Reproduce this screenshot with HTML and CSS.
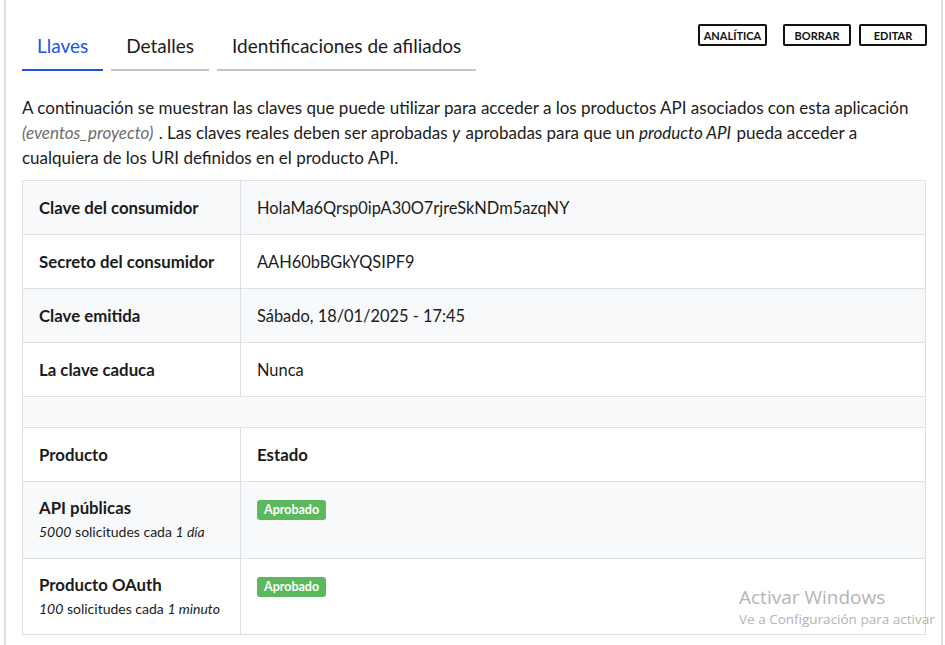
FILE: index.html
```html
<!DOCTYPE html>
<html lang="es">
<head>
<meta charset="utf-8">
<title>Llaves</title>
<link rel="stylesheet" href="styles.css">
</head>
<body>
<div class="page">
  <div class="top">
    <nav class="tabs">
      <a class="tab active">Llaves</a>
      <a class="tab">Detalles</a>
      <a class="tab">Identificaciones de afiliados</a>
    </nav>
    <div class="actions">
      <button class="btn btn-first">ANALÍTICA</button>
      <button class="btn">BORRAR</button>
      <button class="btn">EDITAR</button>
    </div>
  </div>
  <p class="intro">A continuación se muestran las claves que puede utilizar para acceder a los productos API asociados con esta aplicación <em class="app">(eventos_proyecto)</em> . Las claves reales deben ser aprobadas <em>y</em> aprobadas para que un <em>producto API</em> pueda acceder a cualquiera de los URI definidos en el producto API.</p>
  <table class="keys">
    <colgroup><col class="c1"><col></colgroup>
    <tr class="shade"><th>Clave del consumidor</th><td>HolaMa6Qrsp0ipA30O7rjreSkNDm5azqNY</td></tr>
    <tr><th>Secreto del consumidor</th><td>AAH60bBGkYQSIPF9</td></tr>
    <tr class="shade"><th>Clave emitida</th><td>Sábado, 18/01/2025 - 17:45</td></tr>
    <tr><th>La clave caduca</th><td>Nunca</td></tr>
    <tr class="shade spacer"><td colspan="2"></td></tr>
    <tr><th>Producto</th><th>Estado</th></tr>
    <tr class="shade prod"><th>API públicas<span class="quota"><em>5000</em> solicitudes cada <em>1 día</em></span></th><td><span class="badge">Aprobado</span></td></tr>
    <tr class="prod"><th>Producto OAuth<span class="quota"><em>100</em> solicitudes cada <em>1 minuto</em></span></th><td><span class="badge">Aprobado</span></td></tr>
  </table>
</div>
<div class="watermark">
  <div class="wm-title">Activar Windows</div>
  <div class="wm-sub">Ve a Configuración para activar</div>
</div>
</body>
</html>
```
FILE: styles.css
```css
html, body {
  margin: 0;
  padding: 0;
  background: #fff;
  overflow: hidden;
}
body {
  font-family: Lato, "Noto Sans", sans-serif;
  color: #1b1b1b;
  height: 645px;
}
.page {
  margin-left: 4px;
  width: 939px;
  height: 645px;
  border-left: 2px solid #dedede;
  border-right: 2px solid #dedede;
  padding: 0 15px 0 16px;
  box-sizing: border-box;
}
.top {
  display: flex;
  justify-content: space-between;
  align-items: flex-start;
}
.tabs {
  display: flex;
  gap: 8px;
  margin-top: 34px;
}
.tab {
  font-size: 19px;
  line-height: 24px;
  padding: 0 15px 11px;
  border-bottom: 2px solid #bcc6d0;
  color: #1b1b1b;
}
.tab.active {
  color: #1a55e3;
  border-bottom-color: #1a55e3;
}
.actions {
  display: flex;
  gap: 8px;
  margin-top: 24px;
  margin-right: -1px;
}
.btn {
  font-family: Lato, "Noto Sans", sans-serif;
  font-size: 11px;
  font-weight: 700;
  height: 22px;
  width: 68px;
  padding: 0 2px;
  border: 2px solid #111;
  border-radius: 2px;
  background: #fff;
  color: #111;
}
.btn-first {
  width: 69px;
  margin-right: 8px;
}
.intro {
  margin: 24px 0 10px;
  font-size: 17px;
  line-height: 25px;
  color: #1b1b1b;
}
.intro em {
  font-style: italic;
  padding-right: 1px;
}
.intro .app {
  color: #6c6c6c;
}
.keys {
  width: 904px;
  table-layout: fixed;
  border-collapse: collapse;
  font-size: 16.4px;
}
.keys col.c1 {
  width: 218px;
}
.keys th, .keys td {
  border: 1px solid #dde1e5;
  height: 53px;
  padding: 0 16px;
  text-align: left;
  vertical-align: middle;
}
.keys th {
  font-weight: 700;
  font-size: 16.8px;
}
.keys td {
  font-weight: 400;
}
.keys tr.shade {
  background: #f8f9fa;
}
.keys tr.spacer td {
  height: 30px;
}
.keys tr.prod th, .keys tr.prod td {
  vertical-align: top;
  height: 77px;
  padding-top: 16px;
  line-height: 20px;
  box-sizing: border-box;
}
.keys tr.prod:last-child th, .keys tr.prod:last-child td {
  height: 76px;
}
.quota {
  display: block;
  font-size: 14px;
  font-weight: 400;
  margin-top: 4px;
}
.badge {
  display: inline-block;
  background: #5cb85c;
  color: #fff;
  font-size: 12.5px;
  font-weight: 700;
  padding: 2px 7px;
  border-radius: 3px;
  line-height: 16px;
}
.watermark {
  position: absolute;
  left: 739px;
  top: 585px;
  color: #b4b4b4;
  font-family: "Open Sans", "Noto Sans", sans-serif;
  white-space: nowrap;
}
.wm-title {
  font-size: 19px;
  line-height: 24px;
}
.wm-sub {
  font-size: 13.5px;
  line-height: 20px;
}
```
